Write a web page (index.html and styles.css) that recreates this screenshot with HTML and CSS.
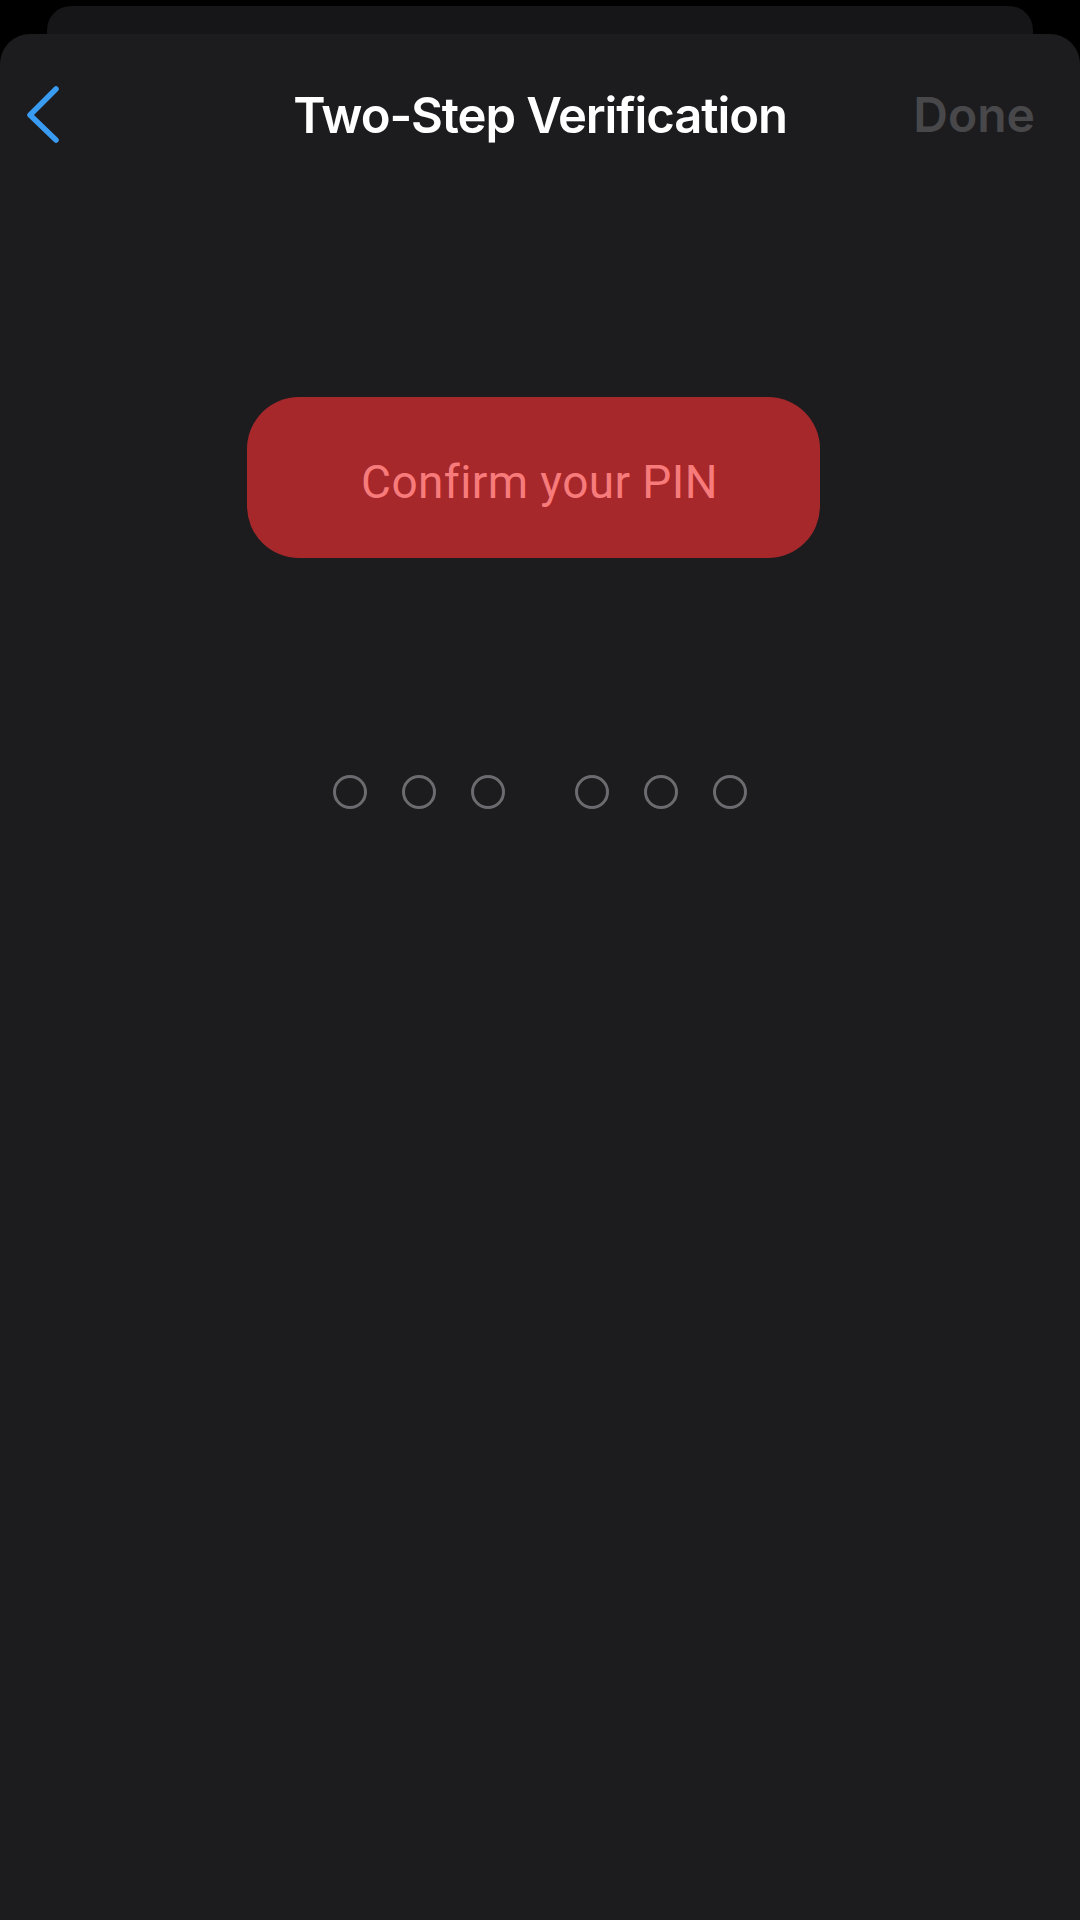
FILE: index.html
```html
<!DOCTYPE html>
<html lang="en">
<head>
<meta charset="utf-8">
<title>Two-Step Verification</title>
<link rel="stylesheet" href="styles.css">
</head>
<body>
<div class="screen">
  <div class="back-card"></div>
  <div class="sheet">
    <header class="nav">
      <div class="nav-left">
        <svg class="chevron" width="40" height="60" viewBox="0 0 40 60" aria-hidden="true">
          <polyline points="31,4 5,30 31,55" fill="none" stroke="#3a9bf3" stroke-width="5.5" stroke-linecap="round" stroke-linejoin="round"/>
        </svg>
      </div>
      <h1 class="title">Two-Step Verification</h1>
      <div class="nav-right"><span class="done">Done</span></div>
    </header>
    <div class="banner"><span class="banner-text">Confirm your PIN</span></div>
    <div class="pin">
      <div class="group">
        <span class="dot"></span><span class="dot"></span><span class="dot"></span>
      </div>
      <div class="group">
        <span class="dot"></span><span class="dot"></span><span class="dot"></span>
      </div>
    </div>
  </div>
</div>
</body>
</html>
```

FILE: styles.css
```css
html, body {
  margin: 0;
  padding: 0;
  background: #000;
  width: 1080px;
  height: 1920px;
  overflow: hidden;
}

.screen {
  padding-top: 6px;
  height: 1914px;
  display: flex;
  flex-direction: column;
}

.back-card {
  height: 28px;
  margin: 0 47px 0 47px;
  background: #161618;
  border-radius: 24px 24px 0 0;
}

.sheet {
  flex: 1;
  background: #1c1c1f;
  border-radius: 30px 30px 0 0;
  display: flex;
  flex-direction: column;
}

.nav {
  height: 162px;
  display: grid;
  grid-template-columns: 1fr auto 1fr;
  align-items: center;
  padding: 0 45px;
}

.nav-left {
  display: flex;
  align-items: center;
  margin-left: -20px;
}

.chevron {
  display: block;
}

.title {
  margin: 0;
  font-family: Inter, "Liberation Sans", sans-serif;
  font-weight: 600;
  font-size: 49px;
  color: #ffffff;
  letter-spacing: -1.1px;
  line-height: 1;
}

.nav-right {
  display: flex;
  justify-content: flex-end;
}

.done {
  font-family: Inter, "Liberation Sans", sans-serif;
  font-weight: 600;
  font-size: 48px;
  color: #48484b;
  line-height: 1;
}

.banner {
  margin: 201px 0 0 247px;
  width: 573px;
  height: 161px;
  box-sizing: border-box;
  padding: 8px 0 0 12px;
  border-radius: 52px;
  background: #a6282b;
  display: flex;
  align-items: center;
  justify-content: center;
}

.banner-text {
  color: #f87b7b;
  font-family: Roboto, "Noto Sans", sans-serif;
  font-size: 46px;
  letter-spacing: 0.4px;
  line-height: 1;
}

.pin {
  margin-top: 217px;
  display: flex;
  justify-content: center;
  gap: 70px;
}

.group {
  display: flex;
  gap: 35px;
}

.dot {
  width: 34px;
  height: 34px;
  box-sizing: border-box;
  border: 3px solid #6b6b70;
  border-radius: 50%;
}
```
